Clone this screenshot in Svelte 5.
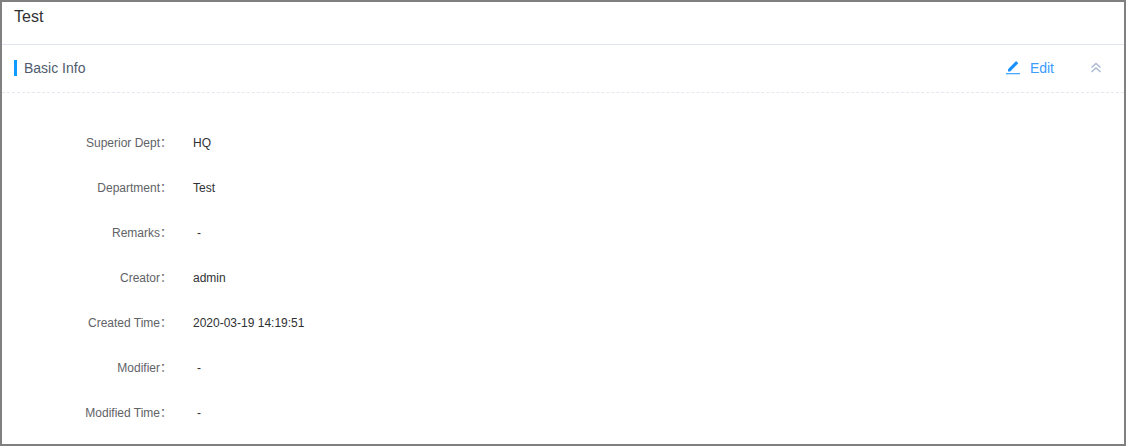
<script>
  const rows = [
    { label: 'Superior Dept', value: 'HQ' },
    { label: 'Department', value: 'Test' },
    { label: 'Remarks', value: '-', empty: true },
    { label: 'Creator', value: 'admin' },
    { label: 'Created Time', value: '2020-03-19 14:19:51' },
    { label: 'Modifier', value: '-', empty: true },
    { label: 'Modified Time', value: '-', empty: true },
  ];
</script>

<div class="frame">
  <div class="title">Test</div>
  <div class="section-head">
    <div class="section-title">Basic Info</div>
    <div class="actions">
      <button class="edit">
        <svg width="15" height="14" viewBox="0 0 15 14">
          <path d="M2 10.4V8.2L9.6.6a.8.8 0 0 1 1.1 0l1.1 1.1a.8.8 0 0 1 0 1.1L4.2 10.4z" fill="#1890ff" />
          <rect x="0" y="12" width="14" height="1.3" fill="#4aa8ff" />
        </svg>
        <span>Edit</span>
      </button>
      <svg class="collapse" width="12" height="12" viewBox="0 0 12 12" fill="none" stroke="#a9b9d0" stroke-width="1.4">
        <path d="M1.5 5.5 6 1.5l4.5 4" />
        <path d="M1.5 10 6 6l4.5 4" />
      </svg>
    </div>
  </div>
  <div class="details">
    {#each rows as row}
      <div class="row">
        <div class="label">{row.label}：</div>
        <div class="value" class:empty={row.empty}>{row.value}</div>
      </div>
    {/each}
  </div>
</div>

<style>
  :global(body) {
    margin: 0;
    background: #fff;
  }

  .frame {
    box-sizing: border-box;
    width: 1126px;
    height: 446px;
    border: 2px solid #808080;
    background: #fff;
    font-family: "Liberation Sans", Arial, "Noto Sans CJK SC", sans-serif;
  }

  .title {
    box-sizing: border-box;
    height: 43px;
    padding: 6px 12px 0;
    font-size: 16px;
    line-height: 18px;
    color: #303133;
    border-bottom: 1px solid #e1e6ee;
  }

  .section-head {
    box-sizing: border-box;
    height: 48px;
    display: flex;
    align-items: center;
    justify-content: space-between;
    border-bottom: 1px dashed #e4e8ef;
    padding: 0 22px 2px 12px;
  }

  .section-title {
    font-size: 14px;
    line-height: 16px;
    color: #4f5b6d;
    border-left: 3px solid #0f9bff;
    padding-left: 7px;
  }

  .actions {
    display: flex;
    align-items: center;
    gap: 36px;
  }

  .edit {
    display: flex;
    align-items: center;
    gap: 9px;
    padding: 0;
    border: 0;
    background: none;
    color: #3a9cff;
    font: inherit;
    font-size: 14px;
  }

  .details {
    padding-top: 28px;
  }

  .row {
    display: flex;
    height: 45px;
    font-size: 12px;
    line-height: 45px;
  }

  .label {
    width: 170px;
    text-align: right;
    color: #606266;
  }

  .value {
    margin-left: 21px;
    color: #303133;
  }

  .value.empty {
    margin-left: 25px;
  }
</style>
